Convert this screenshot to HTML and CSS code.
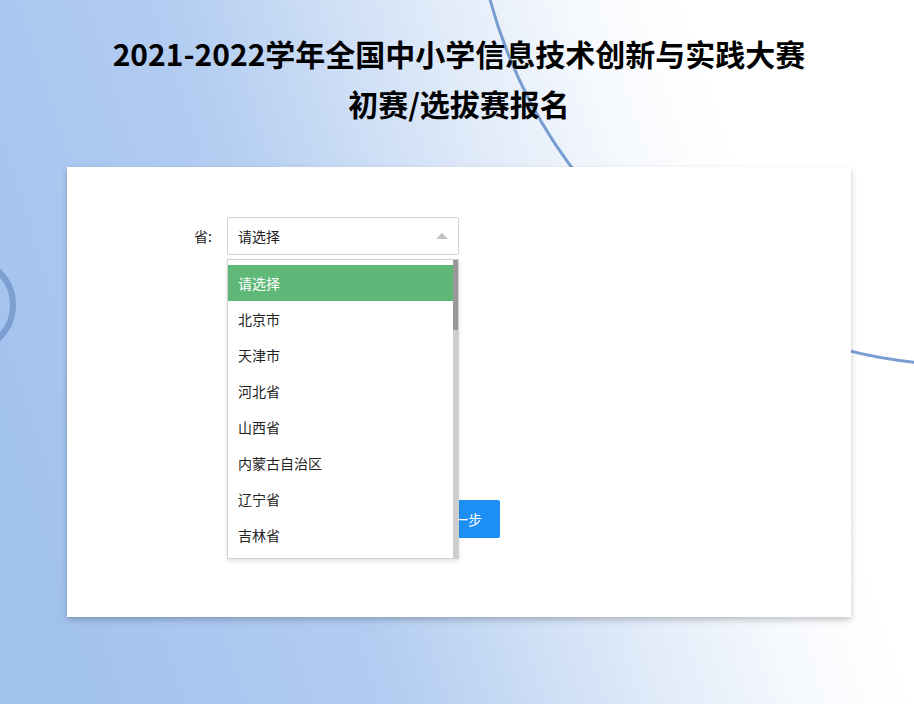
FILE: index.html
```html
<!DOCTYPE html>
<html lang="zh-CN">
<head>
    <meta charset="UTF-8">
    <meta name="viewport" content="width=device-width, initial-scale=1.0">
    <title>初赛/选拔赛报名</title>
    <link rel="stylesheet" href="styles.css">
</head>
<body>
    <!-- background decoration -->
    <svg class="bg-lines" xmlns="http://www.w3.org/2000/svg" width="914" height="704" viewBox="0 0 914 704">
        <circle cx="967" cy="-129" r="494" fill="none" stroke="#789dd0" stroke-width="3" />
        <circle cx="-33" cy="305" r="46" fill="none" stroke="#7c9fd1" stroke-width="6" />
    </svg>

    <div class="page">
        <h1 class="title">2021-2022学年全国中小学信息技术创新与实践大赛<br>初赛/选拔赛报名</h1>

        <div class="card">
            <form class="form">
                <div class="form-item">
                    <label class="form-label">省:</label>
                    <div class="select">
                        <div class="select-title">
                            <span>请选择</span>
                            <i class="edge"></i>
                        </div>
                        <!-- open dropdown, only the visible part of the list -->
                        <div class="select-list">
                            <dl>
                                <dd class="this">请选择</dd>
                                <dd>北京市</dd>
                                <dd>天津市</dd>
                                <dd>河北省</dd>
                                <dd>山西省</dd>
                                <dd>内蒙古自治区</dd>
                                <dd>辽宁省</dd>
                                <dd>吉林省</dd>
                            </dl>
                            <div class="scrollbar"><div class="thumb"></div></div>
                        </div>
                    </div>
                </div>

                <div class="form-actions">
                    <button type="button" class="btn">下一步</button>
                </div>
            </form>
        </div>
    </div>
</body>
</html>
```

FILE: styles.css
```css
body {
    margin: 0;
    padding: 0;
    font-family: "Noto Sans CJK SC", "Microsoft YaHei", sans-serif;
    color: #222;
    min-height: 100vh;
    overflow: hidden;
    position: relative;
    background: linear-gradient(72deg, #a2c2ee 8%, #b3cdf1 35%, #dbe7f8 55%, #f6f9fd 70%, #ffffff 80%);
}

/* background circles */
.bg-lines {
    position: absolute;
    top: 0;
    left: 0;
    z-index: 0;
}

.page {
    position: relative;
    z-index: 1;
    padding-left: 4px;
}

.title {
    margin: 0;
    padding-top: 28px;
    text-align: center;
    font-size: 30px;
    line-height: 50px;
    font-weight: bold;
    color: #000;
}

.card {
    width: 784px;
    margin: 39px auto 0;
    background: #fff;
    box-shadow: 0 3px 6px rgba(0, 0, 0, 0.22);
    box-sizing: border-box;
    padding: 50px 0 79px;
}

.form-item {
    display: flex;
    align-items: flex-start;
    padding-left: 50px;
}

.form-label {
    width: 80px;
    padding: 9px 15px;
    text-align: right;
    font-size: 14px;
    line-height: 20px;
    color: #222;
}

.select {
    position: relative;
    width: 232px;
}

.select-title {
    height: 38px;
    box-sizing: border-box;
    border: 1px solid #d2d2d2;
    border-radius: 2px;
    padding: 0 10px;
    display: flex;
    align-items: center;
    justify-content: space-between;
    font-size: 14px;
    color: #222;
    background: #fff;
}

/* arrow, pointing up while the list is open */
.edge {
    width: 0;
    height: 0;
    border-style: solid;
    border-width: 0 6px 6px;
    border-color: transparent transparent #c2c2c2;
}

.select-list {
    position: absolute;
    top: 42px;
    left: 0;
    width: 100%;
    box-sizing: border-box;
    background: #fff;
    border: 1px solid #d2d2d2;
    box-shadow: 0 2px 4px rgba(0, 0, 0, 0.12);
    z-index: 10;
}

.select-list dl {
    margin: 0;
    padding: 5px 5px 5px 0;
}

.select-list dd {
    margin: 0;
    padding: 0 10px;
    line-height: 36px;
    font-size: 14px;
    color: #222;
    white-space: nowrap;
}

.select-list dd.this {
    background: #5fb878;
    color: #fff;
}

.scrollbar {
    position: absolute;
    top: 0;
    right: 0;
    bottom: 0;
    width: 5px;
    background: #cdcdcd;
}

.scrollbar .thumb {
    height: 70px;
    background: #999;
}

.form-actions {
    margin-top: 245px;
    text-align: center;
}

.btn {
    height: 38px;
    padding: 0 18px;
    margin-left: 4px;
    border: none;
    border-radius: 2px;
    background: #1e90f5;
    color: #fff;
    font-family: inherit;
    font-size: 14px;
    cursor: pointer;
}
```
